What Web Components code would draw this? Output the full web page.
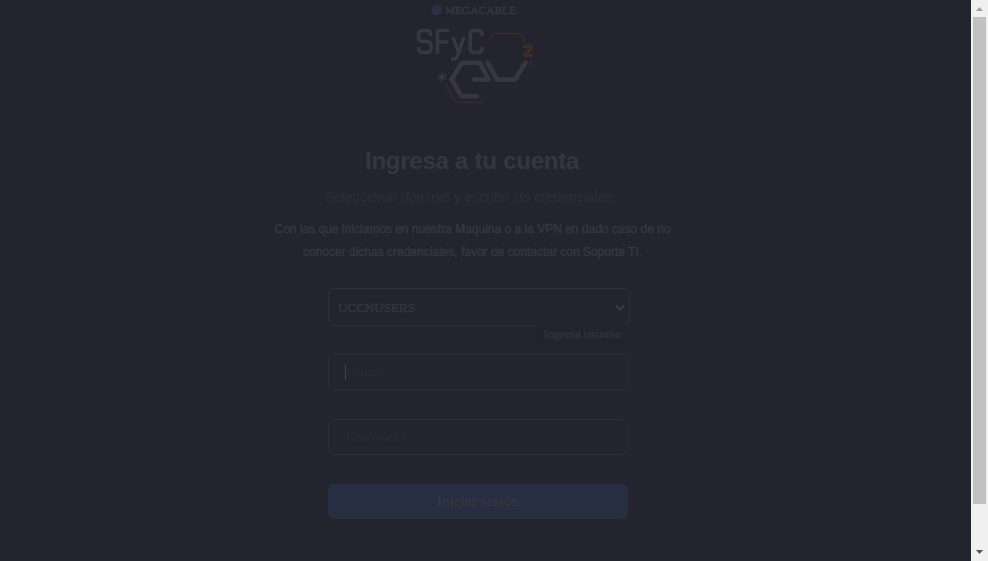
<!DOCTYPE html>
<html lang="es"><head><meta charset="utf-8"><title>SFyC</title>
<style>html,body{margin:0;height:100%;overflow:hidden;background:#24242e}</style></head><body>
<login-page></login-page>
<script>
const define=(name,html,setup)=>customElements.define(name,class extends HTMLElement{
 connectedCallback(){ if(this.shadowRoot)return; this.attachShadow({mode:'open'}).innerHTML=html; if(setup)setup(this,this.shadowRoot); }
});
// One line of text whose letter spacing is set so that it takes the given width
define('fit-text','<style>:host{display:block;white-space:nowrap}span{display:inline-block}</style><span><slot></slot></span>',(el,root)=>{
 const s=root.querySelector('span'),n=el.textContent.length,w=+el.getAttribute('width');
 s.style.letterSpacing=((w-s.getBoundingClientRect().width)/n)+'px';
});
define('brand-logo',`<style>:host{display:block;width:130px;height:108px}svg{display:block}</style>
<svg width="130" height="108" viewBox="410 0 130 108" fill="none" stroke-linejoin="round">
<circle cx="436.5" cy="9.7" r="5.6" fill="#232c40"/>
<path d="M432 11q3-5 9-5M433 14q3-5 9-5M436 15q2-3 5-3" stroke="#363843" stroke-width="1.2"/>
<text x="445" y="13.6" font-family="Liberation Serif,serif" font-size="11" textLength="71" lengthAdjust="spacingAndGlyphs" fill="#363843" stroke="#363843" stroke-width=".35">MEGACABLE</text>
<circle cx="517" cy="13" r=".8" fill="#353742"/>
<g stroke="#373740" stroke-width="3.6">
<path d="M430.5 36v-1.500q0-4-4-4h-4q-4 0-4 4v3q0 4 4 4h4.500q4 0 4 4v3q0 4-4 4h-4.500q-4 0-4-4V47"/>
<path d="M437.500 54V30.500H449M437.500 42h10.500"/>
<path d="M453 37l5.500 15M464 37l-6.500 19q-1 3-4 3h-2"/>
<path d="M482.200 36v-1.500q0-4-4-4h-4q-4 0-4 4v14q0 4 4 4h4q4 0 4-4V47"/></g>
<path d="M474 79.500h14.500l-8.500-16.800h-18L451.500 79.500l10 16.700H477M487.500 62.700l9.500 16.800h18L525.500 62.700" stroke="#373740" stroke-width="4.600" stroke-linecap="round"/>
<path d="M442 72.500v9M438 75l8 4M438 79l8-4" stroke="#373740" stroke-width="1.500"/>
<path d="M490.500 38.500l2.500-3.500q1-1.500 3-1.500h22q3 0 4 2l3 7.500M531 60v3l-1 4M445 83.500l9 15.500q1.500 3.300 4 3.300h22q3 0 5-4.300" stroke="#382b2d" stroke-width="1.700"/>
<path d="M524.500 48v-.5q0-1.500 2-1.500h3q1.500 0 1.500 1.700v.8q0 1.500-2.500 2.300-3.500 1.300-3.500 3v1.700h8" stroke="#412e22" stroke-width="3"/>
</svg>`);
define('field-box',`<style>:host{display:flex;align-items:center;box-sizing:border-box;width:300px;height:36px;border:1px solid #2e2e3b;border-radius:6px;padding-left:17px;font:13px "Liberation Serif",serif;color:#2b2b35}</style><slot></slot>`);
define('select-box',`<style>:host{display:flex;align-items:center;justify-content:space-between;box-sizing:border-box;width:302px;height:38px;border:1px solid #30303d;border-radius:6px;padding:1px 4px 0 9px;font:13px "Liberation Serif",serif;color:#373740;-webkit-text-stroke:.3px #373740}</style><slot></slot><svg width="10" height="8" fill="none"><path d="M1 1.500l4 4 4-4" stroke="#3b3b45" stroke-width="2"/></svg>`);
define('error-tip',`<style>:host{display:block;box-sizing:border-box;position:absolute;left:208px;top:37px;width:92px;height:20px;padding:3px 8px;background:#23232c;font:bold 11px/13px "Liberation Sans",Arial,sans-serif;color:#32323a}
:host::after{content:"";position:absolute;left:73px;top:20px;border:5px solid transparent;border-bottom:0;border-top:5px solid #23232c}</style><slot></slot>`);
define('submit-button',`<style>:host{display:flex;align-items:center;justify-content:center;width:300px;height:35px;border-radius:6px;background:#262e41;color:#38373f;font:14px "Liberation Serif",serif;-webkit-text-stroke:.4px #38373f}</style><slot></slot>`);
define('scroll-bar',`<style>:host{display:flex;flex-direction:column;width:17px;height:561px;background:#f0f0f0}svg{display:block;width:17px;height:17px;flex:none}.thumb{width:13px;height:487px;margin-left:2px;background:#c1c1c1}.gap{flex:1}</style>
<svg><path d="M5 11h7L8.500 7z" fill="#a0a0a0"/></svg><div class="thumb"></div><div class="gap"></div><svg><path d="M5 6h7L8.500 10z" fill="#505050"/></svg>`);
define('login-page',`<style>
:host{display:flex;justify-content:space-between;width:988px;height:561px;background:#24242e;font-family:"Liberation Sans",Arial,sans-serif;color:#34343e}
main{display:flex;flex-direction:column;align-items:center;width:971px;height:561px}
brand-logo{margin-right:21px}
.title{font:bold 24px/28px "Liberation Sans";margin:39px 27px 0 0;color:#36363f}
.sub{font-size:14px;line-height:18px;margin:13px 30px 0 0;color:#2d2d39}
.p{font-size:12px;line-height:23px;margin-right:26px;color:#373740;-webkit-text-stroke:.4px #373740}
.p.first{margin-top:12px}
form{display:flex;flex-direction:column;align-items:flex-start;width:302px;margin:24px 0 0 -13px}
.domain{position:relative}.user{margin-top:28px}.pass{margin-top:29px}submit-button{margin-top:29px}
.caret{width:1px;height:15px;background:#454550;margin-left:-1px}
</style><main><brand-logo></brand-logo>
<fit-text class="title" width="214">Ingresa a tu cuenta</fit-text>
<fit-text class="sub" width="291">Seleccionar dominio y escribir las credenciales:</fit-text>
<fit-text class="p first" width="396">Con las que iniciamos en nuestra Maquina o a la VPN en dado caso de no</fit-text>
<fit-text class="p" width="339">conocer dichas credenciales, favor de contactar con Soporte TI.</fit-text>
<form><div class="domain"><select-box><fit-text width="77">UCCNUSERS</fit-text></select-box><error-tip><fit-text width="77">Ingresa usuario</fit-text></error-tip></div>
<field-box class="user"><span class="caret"></span><fit-text width="41">Usuario</fit-text></field-box>
<field-box class="pass"><fit-text width="59">Contraseña</fit-text></field-box>
<submit-button><fit-text width="82">Iniciar sesión</fit-text></submit-button></form>
</main><scroll-bar></scroll-bar>`);
</script></body></html>
